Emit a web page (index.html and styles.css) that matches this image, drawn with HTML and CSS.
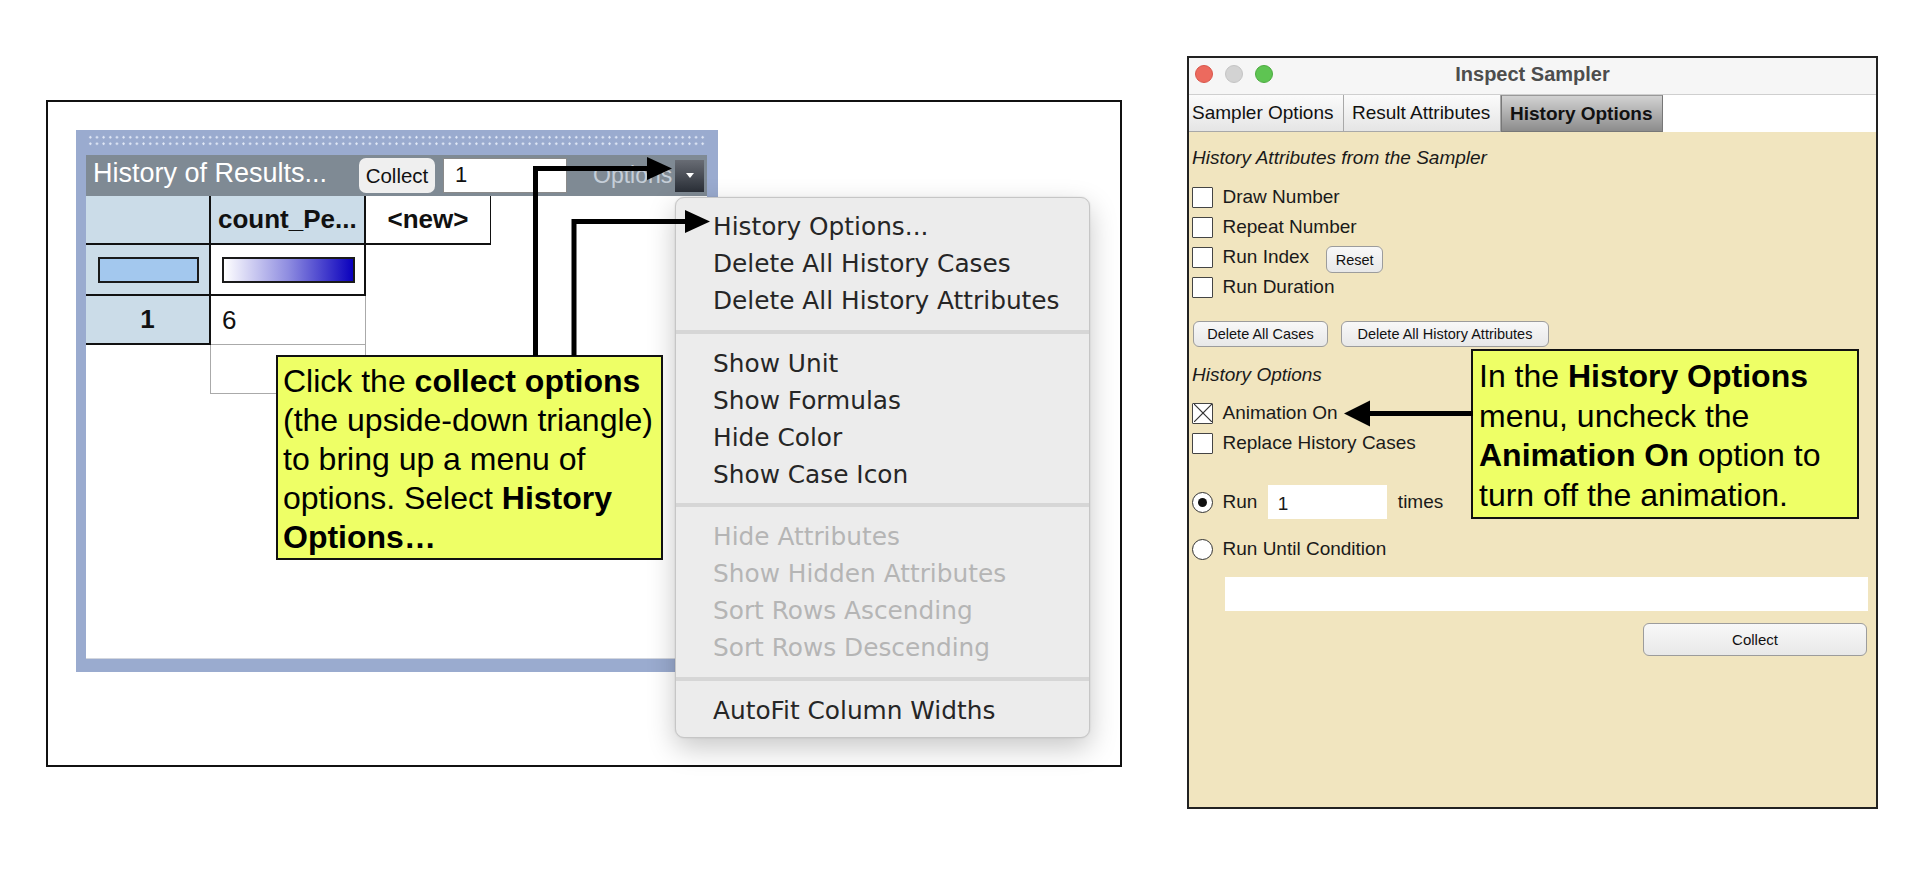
FILE: index.html
```html
<!DOCTYPE html>
<html lang="en">
<head>
<meta charset="utf-8">
<title>History Options</title>
<link rel="stylesheet" href="styles.css">
</head>
<body>
<div class="page">
  <div class="frame">
    <div class="case-table">
      <div class="grip"><div class="dots"></div></div>
      <div class="titlebar">
        <span class="tb-title">History of Results...</span>
        <button class="tb-collect">Collect</button>
        <div class="tb-input">1</div>
        <span class="tb-options">Options</span>
        <div class="tb-drop"><svg width="10" height="7" viewBox="0 0 10 7"><polygon points="1,1 9,1 5,6" fill="#fff"/></svg></div>
      </div>
      <div class="table-area">
        <div class="grid">
          <div class="c hdr lbl"></div>
          <div class="c hdr cnt">count_Pe...</div>
          <div class="c hdr new">&lt;new&gt;</div>

          <div class="c lbl sw-cell"><span class="swatch sw-blue"></span></div>
          <div class="c cnt-dark sw-cell"><span class="swatch sw-grad"></span></div>
          <div class="c empty"></div>

          <div class="c lbl num">1</div>
          <div class="c data">6</div>
          <div class="c empty"></div>

          <div class="c empty"></div>
          <div class="c data data-last"></div>
          <div class="c empty"></div>
        </div>
      </div>
    </div>
  </div>

  <div class="window">
    <div class="win-title">
      <div class="lights"><span class="light red"></span><span class="light gray"></span><span class="light green"></span></div>
      <div class="win-name">Inspect Sampler</div>
      <div></div>
    </div>
    <div class="tabs">
      <div class="tab tab-first">Sampler Options</div>
      <div class="tab tab-second">Result Attributes</div>
      <div class="tab active">History Options</div>
    </div>
    <div class="win-body">
      <div class="sec-title">History Attributes from the Sampler</div>
      <div class="opts">
        <div class="row"><span class="cb"></span><span>Draw Number</span></div>
        <div class="row"><span class="cb"></span><span>Repeat Number</span></div>
        <div class="row"><span class="cb"></span><span>Run Index</span><button class="btn reset">Reset</button></div>
        <div class="row"><span class="cb"></span><span>Run Duration</span></div>
      </div>
      <div class="btnrow">
        <button class="btn del1">Delete All Cases</button>
        <button class="btn del2">Delete All History Attributes</button>
      </div>
      <div class="sec-title sec2">History Options</div>
      <div class="row row-anim"><span class="cb"><svg width="18" height="18" viewBox="0 0 18 18"><line x1="0" y1="0" x2="18" y2="18" stroke="#333" stroke-width="1.2"/><line x1="18" y1="0" x2="0" y2="18" stroke="#333" stroke-width="1.2"/></svg></span><span>Animation On</span></div>
      <div class="row"><span class="cb"></span><span>Replace History Cases</span></div>
      <div class="run-row"><span class="radio on"></span><span>Run</span><div class="field">1</div><span class="times">times</span></div>
      <div class="row row-until"><span class="radio"></span><span>Run Until Condition</span></div>
      <div class="cond"></div>
      <div class="collect-row"><button class="btn collect">Collect</button></div>
    </div>
  </div>

  <div class="menu">
    <div class="mi">History Options...</div>
    <div class="mi">Delete All History Cases</div>
    <div class="mi">Delete All History Attributes</div>
    <div class="msep"></div>
    <div class="mi">Show Unit</div>
    <div class="mi">Show Formulas</div>
    <div class="mi">Hide Color</div>
    <div class="mi">Show Case Icon</div>
    <div class="msep"></div>
    <div class="mi dis">Hide Attributes</div>
    <div class="mi dis">Show Hidden Attributes</div>
    <div class="mi dis">Sort Rows Ascending</div>
    <div class="mi dis">Sort Rows Descending</div>
    <div class="msep"></div>
    <div class="mi">AutoFit Column Widths</div>
  </div>

  <div class="callout callout-left">Click the <b>collect options</b><br>(the upside-down triangle)<br>to bring up a menu of<br>options. Select <b>History</b><br><b>Options…</b></div>

  <div class="callout callout-right">In the <b>History Options</b><br>menu, uncheck the<br><b>Animation On</b> option to<br>turn off the animation.</div>

  <svg class="arrows" width="1918" height="876" viewBox="0 0 1918 876">
    <polyline points="535.5,356 535.5,168.5 650,168.5" fill="none" stroke="#000" stroke-width="5"/>
    <polygon points="647,157 672,168.5 647,180" fill="#000"/>
    <polyline points="574,356 574,221.5 687,221.5" fill="none" stroke="#000" stroke-width="5"/>
    <polygon points="685,210 710,221.5 685,233" fill="#000"/>
    <line x1="1473" y1="413.5" x2="1368" y2="413.5" stroke="#000" stroke-width="5"/>
    <polygon points="1370,400.5 1344,413.5 1370,426.5" fill="#000"/>
  </svg>
</div>
</body>
</html>
```

FILE: styles.css
```css
* { box-sizing: border-box; }
html, body { margin: 0; padding: 0; background: #fff; }
body { font-family: "Liberation Sans", Arial, sans-serif; color: #111; }

.page {
  position: relative;
  width: 100%;
  height: 876px;
  overflow: hidden;
  display: flex;
  align-items: flex-start;
  padding-left: 46px;
  gap: 65px;
}

/* ---------- left frame / case table ---------- */
.frame {
  margin-top: 100px;
  width: 1076px;
  height: 667px;
  border: 2px solid #111;
  padding: 28px;
}
.case-table {
  width: 642px;
  height: 542px;
  background: #9aabcf;
  padding: 0 11px 13px 10px;
  display: flex;
  flex-direction: column;
}
.grip { height: 25px; padding-top: 4px; }
.dots {
  height: 13px;
  margin-left: 1px;
  background-image: radial-gradient(circle, #e3eaf7 0.9px, rgba(255,255,255,0) 1.4px);
  background-size: 6.67px 6.5px;
}
.titlebar {
  height: 41px;
  background: #7f8a94;
  display: flex;
  align-items: center;
  padding-left: 7px;
}
.tb-title {
  width: 266px;
  color: #fff;
  font-size: 27px;
  white-space: nowrap;
  margin-top: -5px;
}
.tb-collect {
  width: 76px;
  height: 35px;
  border: none;
  border-radius: 7px;
  background: #efefef;
  font-family: "Liberation Sans", Arial, sans-serif;
  font-size: 20.5px;
  color: #111;
  padding: 0;
}
.tb-input {
  margin-left: 8px;
  width: 124px;
  height: 35px;
  background: #fff;
  border: 1px solid #8a8a8a;
  font-size: 22px;
  line-height: 32px;
  padding-left: 11px;
  color: #111;
}
.tb-options {
  margin-left: 26px;
  width: 82px;
  color: #c5ced8;
  font-size: 23px;
  white-space: nowrap;
  overflow: hidden;
}
.tb-drop {
  width: 29px;
  height: 32px;
  background: linear-gradient(#686c74, #2a2f37);
  display: flex;
  align-items: center;
  justify-content: center;
}
.table-area {
  flex: 1;
  background: #fff;
  border-bottom: 1px solid #d2d6de;
}
.grid {
  display: grid;
  grid-template-columns: 125px 155px 125px;
  grid-template-rows: 49px 51px 49px 49px;
}
.c { display: flex; align-items: center; }
.hdr { font-weight: bold; font-size: 26px; border-bottom: 2px solid #111; }
.lbl { background: #cbdce8; border-right: 2px solid #111; border-bottom: 2px solid #111; }
.hdr.cnt { background: #cbdce8; border-right: 2px solid #111; padding-left: 7px; white-space: nowrap; }
.hdr.new { background: #fff; border-right: 1.5px solid #111; justify-content: center; }
.cnt-dark { background: #fff; border-right: 2px solid #111; border-bottom: 2px solid #111; }
.sw-cell { align-items: flex-start; padding-top: 12px; padding-left: 12px; }
.cnt-dark.sw-cell { padding-left: 11px; }
.swatch { display: block; height: 26px; border: 2px solid #1a1a1a; }
.sw-blue { width: 101px; background: #a3c8ee; }
.sw-grad { width: 133px; background: linear-gradient(90deg, #ffffff 0%, #8e8ce0 50%, #0a00bd 100%); }
.num { justify-content: center; font-weight: bold; font-size: 26px; }
.data {
  background: #fff;
  border-right: 1.5px solid #aaa;
  border-bottom: 1.5px solid #aaa;
  font-size: 26px;
  padding-left: 11px;
}
.data-last { border-left: 1.5px solid #aaa; margin-left: -1.5px; }
.empty { background: transparent; }

/* ---------- right window ---------- */
.window {
  margin-top: 56px;
  width: 691px;
  height: 753px;
  border: 2px solid #222;
  display: flex;
  flex-direction: column;
  background: #fff;
}
.win-title {
  height: 37px;
  background: #f6f6f6;
  border-bottom: 1px solid #cfcfcf;
  display: grid;
  grid-template-columns: 1fr auto 1fr;
  align-items: center;
  padding-bottom: 4px;
}
.lights { display: flex; gap: 12px; padding-left: 6px; }
.light { width: 18px; height: 18px; border-radius: 50%; display: block; }
.red { background: #ec6a5e; border: 1px solid #d9564b; }
.gray { background: #d3d3d3; border: 1px solid #c4c4c4; }
.green { background: #5ec452; border: 1px solid #4cab40; }
.win-name { font-weight: bold; font-size: 20px; color: #4d4d4d; }

.tabs { height: 37px; display: flex; background: #fff; }
.tab {
  display: flex;
  align-items: center;
  padding-left: 8px;
  font-size: 19px;
  color: #111;
  background: linear-gradient(#fbfbfb, #e5e5e5);
  border-right: 1px solid #a8a8a8;
  border-bottom: 1px solid #a8a8a8;
  white-space: nowrap;
}
.tab-first { width: 155px; padding-left: 3px; }
.tab-second { width: 157px; }
.tab.active {
  width: 162px;
  font-weight: bold;
  background: linear-gradient(#d2d2d2, #8c8c8c);
  border: 1px solid #777;
  border-top: 1px solid #999;
}

.win-body {
  flex: 1;
  background: #f1e5bf;
  padding-left: 3px;
  font-size: 19px;
  color: #1a1a1a;
}
.sec-title { margin-top: 14px; height: 24px; line-height: 24px; font-style: italic; }
.opts { margin-top: 12px; }
.row { height: 30px; display: flex; align-items: center; gap: 9.5px; white-space: nowrap; }
.cb {
  width: 21px;
  height: 21px;
  background: #fff;
  border: 1.5px solid #444;
  border-radius: 1px;
  display: flex;
  align-items: center;
  justify-content: center;
  flex: none;
}
.cb svg { display: block; }
.btn {
  font-family: "Liberation Sans", Arial, sans-serif;
  font-size: 14.5px;
  color: #111;
  background: linear-gradient(#f8f8f8, #e8e8e8);
  border: 1.5px solid #9c9c9c;
  border-radius: 6px;
  padding: 0;
}
.reset { width: 57px; height: 27px; margin-left: 7.5px; margin-top: 5px; }
.btnrow { margin-top: 19px; margin-left: 1px; display: flex; gap: 13px; }
.del1 { width: 135px; height: 26px; }
.del2 { width: 208px; height: 26px; }
.sec2 { margin-top: 16px; }
.row-anim { margin-top: 11px; }
.run-row { margin-top: 27px; height: 34px; display: flex; align-items: center; gap: 9.5px; }
.radio {
  width: 21px;
  height: 21px;
  border-radius: 50%;
  background: #fff;
  border: 1.5px solid #333;
  display: flex;
  align-items: center;
  justify-content: center;
  flex: none;
}
.radio.on::after { content: ""; width: 9px; height: 9px; border-radius: 50%; background: #111; }
.field {
  margin-left: 1px;
  width: 119px;
  height: 34px;
  background: #fff;
  padding-left: 10px;
  padding-top: 4px;
  line-height: 30px;
}
.times { margin-left: 1.5px; }
.row-until { margin-top: 15px; }
.cond { margin: 13px 8px 0 33px; height: 34px; background: #fff; }
.collect-row { margin-top: 12px; margin-right: 9px; display: flex; justify-content: flex-end; }
.collect { width: 224px; height: 33px; font-size: 15px; }

/* ---------- popup menu ---------- */
.menu {
  position: absolute;
  left: 675px;
  top: 197px;
  width: 415px;
  height: 541px;
  background: #ececec;
  border: 1px solid #c6c6c6;
  border-radius: 9px;
  box-shadow: 0 10px 28px rgba(0,0,0,0.22), 0 0 2px rgba(0,0,0,0.12);
  padding-top: 10px;
  font-family: "DejaVu Sans", sans-serif;
  font-size: 24.8px;
  color: #262626;
}
.mi { height: 37px; line-height: 37px; padding-left: 37px; white-space: nowrap; }
.mi.dis { color: #b5b5b5; }
.msep { height: 25.5px; display: flex; align-items: center; }
.msep::before { content: ""; display: block; width: 100%; height: 4px; background: #d6d6d6; }

/* ---------- callouts ---------- */
.callout {
  position: absolute;
  background: #eeff66;
  border: 2px solid #111;
  font-family: "Liberation Sans", Arial, sans-serif;
  font-size: 32px;
  color: #000;
  white-space: nowrap;
}
.callout-left { left: 276px; top: 355px; width: 387px; height: 205px; padding: 5px 0 0 5px; line-height: 39px; }
.callout-right { left: 1471px; top: 349px; width: 388px; height: 170px; padding: 6px 0 0 6px; line-height: 39.5px; }

.arrows { position: absolute; left: 0; top: 0; pointer-events: none; }
```
